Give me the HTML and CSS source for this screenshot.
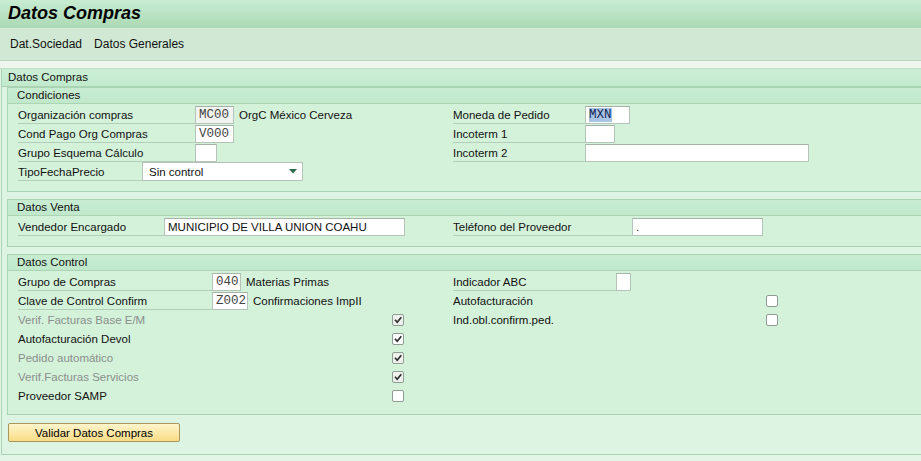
FILE: index.html
```html
<!DOCTYPE html>
<html lang="es">
<head>
<meta charset="utf-8">
<title>Datos Compras</title>
<link rel="stylesheet" href="styles.css">
</head>
<body>
<div class="titlebar"><h1 class="title">Datos Compras</h1></div>
<div class="toolbar">
  <span class="tool">Dat.Sociedad</span>
  <span class="tool">Datos Generales</span>
</div>
<div class="strip"></div>
<div class="frame">
  <div class="frame-head">Datos Compras</div>
  <div class="frame-body">
    <section class="group">
      <div class="group-head">Condiciones</div>
      <div class="group-body">
        <div class="col">
          <div class="row"><span class="lbl l-cond">Organización compras</span><span class="inp mono ro i-code4">MC00</span><span class="desc">OrgC México Cerveza</span></div>
          <div class="row"><span class="lbl l-cond">Cond Pago Org Compras</span><span class="inp mono i-code4">V000</span></div>
          <div class="row"><span class="lbl l-cond">Grupo Esquema Cálculo</span><span class="inp mono i-small"></span></div>
          <div class="row"><span class="lbl l-tipo">TipoFechaPrecio</span>
            <span class="select"><span class="select-text">Sin control</span>
              <svg class="select-arrow" width="8" height="5" viewBox="0 0 8 5"><path d="M0 0H8L4 4.5Z" fill="#2f6b4c"/></svg>
            </span>
          </div>
        </div>
        <div class="col">
          <div class="row"><span class="lbl l-cond-r">Moneda de Pedido</span><span class="inp mono i-mxn"><span class="sel">MXN</span></span></div>
          <div class="row"><span class="lbl l-cond-r">Incoterm 1</span><span class="inp mono i-inc1"></span></div>
          <div class="row"><span class="lbl l-cond-r">Incoterm 2</span><span class="inp mono i-inc2"></span></div>
        </div>
      </div>
    </section>

    <section class="group">
      <div class="group-head">Datos Venta</div>
      <div class="group-body">
        <div class="col">
          <div class="row"><span class="lbl l-venta">Vendedor Encargado</span><span class="inp i-vend">MUNICIPIO DE VILLA UNION COAHU</span></div>
        </div>
        <div class="col">
          <div class="row"><span class="lbl l-venta-r">Teléfono del Proveedor</span><span class="inp i-tel">.</span></div>
        </div>
      </div>
    </section>

    <section class="group group-ctrl">
      <div class="group-head">Datos Control</div>
      <div class="group-body">
        <div class="col">
          <div class="row"><span class="lbl l-ctrl">Grupo de Compras</span><span class="inp mono i-code3">040</span><span class="desc">Materias Primas</span></div>
          <div class="row"><span class="lbl l-ctrl">Clave de Control Confirm</span><span class="inp mono i-code4b">Z002</span><span class="desc">Confirmaciones ImpII</span></div>
          <div class="row"><span class="clbl l-chk dis">Verif. Facturas Base E/M</span><span class="chk on dimbox"><svg width="10" height="10" viewBox="0 0 10 10"><path d="M2 4.8L4.2 7.2L8.3 2.3" fill="none" stroke="#2b2b2b" stroke-width="1.7"/></svg></span></div>
          <div class="row"><span class="clbl l-chk">Autofacturación Devol</span><span class="chk on"><svg width="10" height="10" viewBox="0 0 10 10"><path d="M2 4.8L4.2 7.2L8.3 2.3" fill="none" stroke="#2b2b2b" stroke-width="1.7"/></svg></span></div>
          <div class="row"><span class="clbl l-chk dis">Pedido automático</span><span class="chk on dimbox"><svg width="10" height="10" viewBox="0 0 10 10"><path d="M2 4.8L4.2 7.2L8.3 2.3" fill="none" stroke="#2b2b2b" stroke-width="1.7"/></svg></span></div>
          <div class="row"><span class="clbl l-chk dis">Verif.Facturas Servicios</span><span class="chk on dimbox"><svg width="10" height="10" viewBox="0 0 10 10"><path d="M2 4.8L4.2 7.2L8.3 2.3" fill="none" stroke="#2b2b2b" stroke-width="1.7"/></svg></span></div>
          <div class="row"><span class="clbl l-chk">Proveedor SAMP</span><span class="chk"></span></div>
        </div>
        <div class="col">
          <div class="row"><span class="lbl l-abc">Indicador ABC</span><span class="inp mono i-abc"></span></div>
          <div class="row"><span class="clbl l-chk-r">Autofacturación</span><span class="chk"></span></div>
          <div class="row"><span class="clbl l-chk-r">Ind.obl.confirm.ped.</span><span class="chk"></span></div>
        </div>
      </div>
    </section>

    <div class="actions"><button class="btn" type="button">Validar Datos Compras</button></div>
  </div>
</div>
</body>
</html>
```

FILE: styles.css
```css
* { box-sizing: border-box; }
html, body { margin: 0; padding: 0; }
body {
  width: 921px;
  height: 461px;
  overflow: hidden;
  background: #e2f5e6;
  font-family: "Liberation Sans", Arial, sans-serif;
  font-size: 11.5px;
  color: #111;
}

.titlebar {
  height: 29px;
  background: linear-gradient(#c8ecd1, #abd9b5);
  border-bottom: 1px solid #d6ecda;
  padding-left: 8px;
}
.title {
  margin: 0;
  font-size: 18px;
  font-weight: bold;
  font-style: italic;
  line-height: 26px;
  color: #000;
}

.toolbar {
  height: 32px;
  background: #d0e8d4;
  border-bottom: 1px solid #b9d6bf;
  display: flex;
  align-items: center;
  gap: 12px;
  padding-left: 10px;
  padding-bottom: 1px;
  font-size: 12px;
}

.strip {
  height: 8px;
  background: #eef6ef;
  border-bottom: 1px solid #c1dec7;
}

.frame {
  margin-left: 1px;
  width: 960px;
  border-left: 1px solid #aad3b4;
  border-bottom: 1px solid #aad3b4;
  background: #ddf4e2;
  padding-bottom: 12px;
}
.frame-head {
  height: 18px;
  background: linear-gradient(#cbefd6, #c1eacd);
  border-bottom: 1px solid #a8d6b3;
  padding-left: 6px;
  line-height: 17px;
}
.frame-body { padding-left: 5px; }

.group {
  border: 1px solid #aad3b4;
  background: #d4f1da;
  margin-bottom: 7px;
}
.group-ctrl { margin-bottom: 8px; }
.group-head {
  height: 16px;
  background: linear-gradient(#c8ecd2, #c0e8cb);
  border-bottom: 1px solid #abd4b5;
  padding-left: 9px;
  line-height: 15px;
}
.group-body {
  display: grid;
  grid-template-columns: 435px 1fr;
  padding: 1px 0 10px 10px;
}
.group-ctrl .group-body { padding-bottom: 9px; }

.row {
  height: 19px;
  display: flex;
  align-items: center;
}

.lbl {
  flex: none;
  height: 18px;
  line-height: 18px;
  border-bottom: 1px solid #b3cfb9;
  white-space: nowrap;
}
.clbl {
  flex: none;
  line-height: 18px;
  white-space: nowrap;
}
.dis { color: #8a8f8b; }

.l-cond { width: 177px; }
.l-tipo { width: 124px; }
.l-cond-r { width: 132px; }
.l-venta { width: 146px; }
.l-venta-r { width: 179px; }
.l-ctrl { width: 194px; }
.l-abc { width: 163px; }
.l-chk { width: 374px; }
.l-chk-r { width: 313px; }

.inp {
  flex: none;
  height: 18px;
  background: #fff;
  border: 1px solid #b6c3b9;
  border-top-color: #a4b2a7;
  padding-left: 3px;
  line-height: 16px;
  white-space: nowrap;
  overflow: hidden;
}
.mono {
  font-family: "Liberation Mono", "Courier New", monospace;
  font-size: 12.5px;
  color: #444;
}
.ro { background: #f1f4f1; }

.i-code4 { width: 39px; }
.i-small { width: 22px; }
.i-mxn { width: 45px; }
.i-inc1 { width: 30px; }
.i-inc2 { width: 224px; }
.i-vend { width: 241px; }
.i-tel { width: 131px; }
.i-code3 { width: 29px; }
.i-code4b { width: 36px; }
.i-abc { width: 15px; }

.sel {
  display: inline-block;
  background: #a9c3e2;
  color: #12275a;
  line-height: 14px;
}

.desc {
  padding-left: 5px;
  white-space: nowrap;
}

.select {
  flex: none;
  width: 161px;
  height: 19px;
  background: #fff;
  border: 1px solid #b6c3b9;
  display: flex;
  align-items: center;
  padding: 0 5px 0 6px;
}
.select-text { flex: 1; }
.select-arrow { flex: none; }

.chk {
  flex: none;
  width: 12px;
  height: 12px;
  border: 1px solid #8f9c93;
  border-radius: 2px;
  background: #fff;
  display: flex;
  align-items: center;
  justify-content: center;
}
.dimbox { background: #eef1ee; }

.actions { padding-left: 1px; }
.btn {
  width: 172px;
  height: 19px;
  padding: 0;
  border: 1px solid #a8965a;
  border-radius: 2px;
  background: linear-gradient(#fff5cc, #f9dc86);
  font-family: "Liberation Sans", Arial, sans-serif;
  font-size: 11.5px;
  color: #000;
}
```
